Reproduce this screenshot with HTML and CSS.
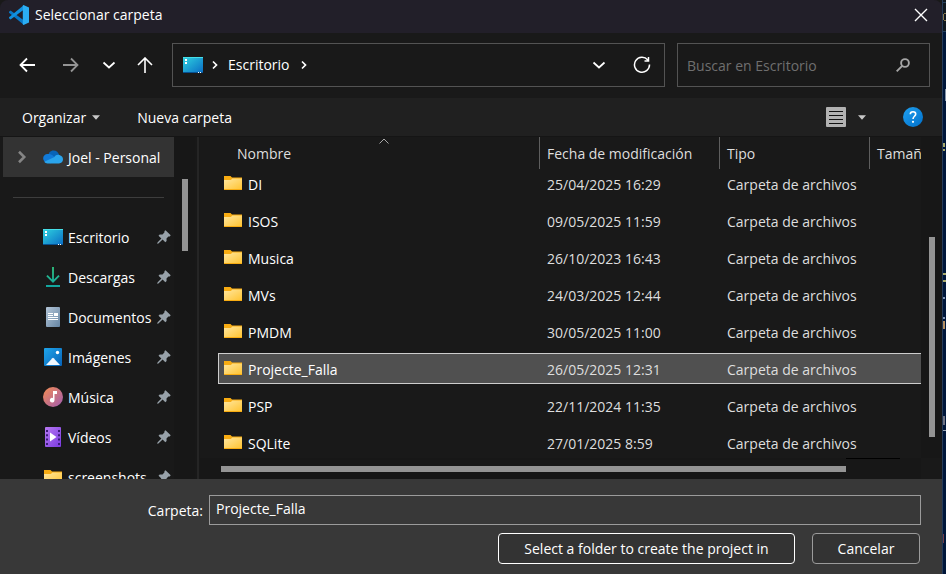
FILE: index.html
```
<!DOCTYPE html>
<html lang="es">
<head>
<meta charset="utf-8">
<title>Seleccionar carpeta</title>
<link rel="stylesheet" href="styles.css">
</head>
<body>
<svg class="defs" aria-hidden="true">
  <defs>
    <linearGradient id="g-folder" x1="0" y1="0" x2="1" y2="1"><stop offset="0" stop-color="#ffe7a0"/><stop offset="1" stop-color="#ffc433"/></linearGradient>
    <linearGradient id="g-desk" x1="0" y1="0" x2="1" y2="1"><stop offset="0" stop-color="#2fd3e0"/><stop offset="1" stop-color="#0a6cc4"/></linearGradient>
    <linearGradient id="g-down" x1="0" y1="0" x2="0" y2="1"><stop offset="0" stop-color="#2fc481"/><stop offset="1" stop-color="#12a5a0"/></linearGradient>
    <linearGradient id="g-doc" x1="0" y1="0" x2="1" y2="1"><stop offset="0" stop-color="#b4c6d8"/><stop offset="1" stop-color="#6585a3"/></linearGradient>
    <linearGradient id="g-img" x1="0" y1="0" x2="1" y2="1"><stop offset="0" stop-color="#1fa5ea"/><stop offset="1" stop-color="#0662b8"/></linearGradient>
    <linearGradient id="g-music" x1="0" y1="0" x2="1" y2="1"><stop offset="0" stop-color="#f58d52"/><stop offset="1" stop-color="#a05bb0"/></linearGradient>
    <linearGradient id="g-video" x1="0" y1="0" x2="1" y2="1"><stop offset="0" stop-color="#b778f2"/><stop offset="1" stop-color="#7a3ae0"/></linearGradient>
    <linearGradient id="g-help" x1="0" y1="0" x2="1" y2="1"><stop offset="0" stop-color="#20a0ee"/><stop offset="1" stop-color="#0070cc"/></linearGradient>
    <symbol id="i-folder" viewBox="0 0 18 14"><path d="M0 0h6.500L8 1.500H18V14H0z" fill="#f8ac12"/><path d="M0 4h7l1.200-1.500H18V13H0z" fill="url(#g-folder)"/></symbol>
    <symbol id="i-desk" viewBox="0 0 20 16"><rect width="20" height="16" rx="1" fill="url(#g-desk)"/><path d="M0 .5h20" stroke="#46dfe8"/><path d="M0 15.500h20" stroke="#075091"/><path d="M2 2h2v2H2zM2 5h2v2H2zM15 15h1v1h-1zM17 15h1v1h-1z" fill="#fff"/></symbol>
    <symbol id="i-pin" viewBox="0 0 14 14"><path d="M8.500.2 13.700 5.200 12.700 6.400l-1.300.1-1.900 1.900.1 2.700-1.300 1.200-2.700-2.700L1.400 13.500.2 13.800l.3-1.200L4.400 8.400 1.500 5.700l1.200-1.200 2.800-.1 1.900-1.900.1-1.400z" fill="#98a2aa"/></symbol>
    <symbol id="i-chev" viewBox="0 0 12 12"><path d="m4 2.500 3.500 3.500L4 9.500" fill="none" stroke="currentColor" stroke-width="1.700"/></symbol>
    <symbol id="i-chevdown" viewBox="0 0 14 14"><path d="m1.500 4.500 5.500 5 5.500-5" fill="none" stroke="currentColor" stroke-width="1.700"/></symbol>
    <symbol id="i-caret" viewBox="0 0 8 5"><path d="M0 .3h8L4 4.700z" fill="currentColor"/></symbol>
  </defs>
</svg>
<div class="desktop">
  <main class="dialog">
    <header class="titlebar">
      <svg class="app-icon" viewBox="0 0 20 20" aria-hidden="true"><path d="M0 6.800 1.600 5.400 15 15.500V20L0 7.800z" fill="#0878c8"/><path d="M0 13.200 1.600 14.600 15 4.500V0L0 12.200z" fill="#1090df"/><path d="M14.500 0 20 2.500v15L14.500 20l-.7-.7V.7z" fill="#2badf2"/></svg>
      <h1>Seleccionar carpeta</h1>
      <button class="close" aria-label="Cerrar"><svg viewBox="0 0 14 14"><path d="m1 1 12 12M13 1 1 13" fill="none" stroke="currentColor" stroke-width="1.400"/></svg></button>
    </header>
    <nav class="navbar" aria-label="Navegación">
      <div class="history">
        <button aria-label="Atrás"><svg viewBox="0 0 16 16"><path d="M16 8H1.500M8 1.500 1.500 8 8 14.500" fill="none" stroke="currentColor" stroke-width="1.800"/></svg></button>
        <button class="off" aria-label="Adelante"><svg viewBox="0 0 16 16"><path d="M0 8h14.500M8 1.500 14.500 8 8 14.500" fill="none" stroke="currentColor" stroke-width="1.800"/></svg></button>
        <button class="recent" aria-label="Ubicaciones recientes"><svg viewBox="0 0 14 14"><use href="#i-chevdown"/></svg></button>
        <button aria-label="Subir"><svg viewBox="0 0 16 16"><path d="M8 16V1M1 8l7-7 7 7" fill="none" stroke="currentColor" stroke-width="1.600"/></svg></button>
      </div>
      <div class="address">
        <svg class="desk" aria-hidden="true"><use href="#i-desk"/></svg>
        <svg class="chev" aria-hidden="true"><use href="#i-chev"/></svg>
        <a href="#">Escritorio</a>
        <svg class="chev" aria-hidden="true"><use href="#i-chev"/></svg>
        <button class="drop" aria-label="Ubicaciones anteriores"><svg viewBox="0 0 14 14"><use href="#i-chevdown"/></svg></button>
        <button class="reload" aria-label="Actualizar"><svg viewBox="0 0 18 18"><path d="M14.800 4A7.500 7.500 0 1 0 16.500 8.500M15.500 1v4h-4" fill="none" stroke="currentColor" stroke-width="1.500"/></svg></button>
      </div>
      <label class="search">
        <input type="search" placeholder="Buscar en Escritorio" aria-label="Buscar en Escritorio">
        <svg viewBox="0 0 14 14" aria-hidden="true"><circle cx="9" cy="5" r="3.900" fill="none" stroke="#a5a5a5" stroke-width="1.900"/><path d="M6.200 7.800.7 13.300" stroke="#a5a5a5" stroke-width="1.900"/></svg>
      </label>
    </nav>
    <div class="toolbar">
      <button>Organizar <svg class="caret" aria-hidden="true"><use href="#i-caret"/></svg></button>
      <button class="new">Nueva carpeta</button>
      <button class="view" aria-label="Cambiar la vista"><svg viewBox="0 0 20 20"><rect width="20" height="20" rx="1" fill="#b2b2b2"/><path d="M3 4.500h14M3 8.500h14M3 12.500h14M3 16.500h14" stroke="#111"/></svg></button>
      <button class="more" aria-label="Más opciones"><svg class="caret"><use href="#i-caret"/></svg></button>
      <button class="help" aria-label="Ayuda"><svg viewBox="0 0 20 20"><circle cx="10" cy="10" r="10" fill="url(#g-help)"/><path d="M7.300 7.200C7.300 5.500 8.400 4.700 10 4.700s2.700.9 2.700 2.300c0 2.200-2.700 2.300-2.700 5" fill="none" stroke="#fff" stroke-width="1.600"/><circle cx="10" cy="14.800" r="1.100" fill="#fff"/></svg></button>
    </div>
    <div class="content">
      <aside class="tree">
        <a class="account" href="#"><svg class="expand" aria-hidden="true"><use href="#i-chev"/></svg><svg class="ico" viewBox="0 0 20 20" aria-hidden="true"><path d="M5.500 9.500C5 5.500 7.500 3.400 10.500 3.400c3 0 5 2 5.500 4.600L10 12z" fill="#0864b8"/><path d="M4.200 15.500A4.200 4.200 0 0 1 4.500 7.100c2.200-.5 3.600.3 5 1.200l4 4-6 4z" fill="#117ad8"/><path d="M11 10.300c1.500-2.300 3.500-2.900 5.500-2.300 2 .6 3.500 2.300 3.500 4.200 0 2.300-1.700 4.200-4 4.200H4.500c-1.300 0-2.500-.6-3.200-1.600z" fill="#2aa4ec"/></svg><span>Joel - Personal</span></a>
        <hr>
        <a href="#"><svg class="ico" viewBox="0 0 20 20" aria-hidden="true"><use href="#i-desk" y="2" width="20" height="16"/></svg><span>Escritorio</span><svg class="pin"><use href="#i-pin"/></svg></a>
        <a href="#"><svg class="ico" viewBox="0 0 20 20" aria-hidden="true"><path d="M9.100 0h1.800v12.500l4.500-4.500 1.300 1.300L10 16 3.300 9.300 4.600 8l4.500 4.500zM3 18h14v2H3z" fill="url(#g-down)"/></svg><span>Descargas</span><svg class="pin"><use href="#i-pin"/></svg></a>
        <a href="#"><svg class="ico" viewBox="0 0 20 20" aria-hidden="true"><rect x="3" width="14" height="20" rx="1" fill="url(#g-doc)"/><path d="M5 6.500h5M5 8.500h5M5 10.500h10M5 12.500h10" stroke="#fff"/><path d="M11 6h4v3h-4z" fill="#fff"/></svg><span>Documentos</span><svg class="pin"><use href="#i-pin"/></svg></a>
        <a href="#"><svg class="ico" viewBox="0 0 20 20" aria-hidden="true"><rect x="1" y="1" width="18" height="18" rx="1" fill="url(#g-img)"/><path d="M3 18l6.300-6.800q.7-.7 1.400 0L17 18z" fill="#f2f8ff"/><circle cx="14.500" cy="5.500" r="1.700" fill="#fff"/></svg><span>Imágenes</span><svg class="pin"><use href="#i-pin"/></svg></a>
        <a href="#"><svg class="ico" viewBox="0 0 20 20" aria-hidden="true"><circle cx="10" cy="10" r="10" fill="url(#g-music)"/><path d="M10 4h4v3h-2.500v6.200A2.300 2.300 0 1 1 10 11z" fill="#fff"/></svg><span>Música</span><svg class="pin"><use href="#i-pin"/></svg></a>
        <a href="#"><svg class="ico" viewBox="0 0 20 20" aria-hidden="true"><rect x="2" width="16" height="20" rx="1" fill="url(#g-video)"/><path d="M4 3v15M16 3v15" stroke="#3b1a78" stroke-width="2" stroke-dasharray="2 2.300"/><path d="M7 5.500v9l6.500-4.500z" fill="#fff"/></svg><span>Vídeos</span><svg class="pin"><use href="#i-pin"/></svg></a>
        <a href="#"><svg class="ico" viewBox="0 0 20 20" aria-hidden="true"><use href="#i-folder" x="1" y="3" width="18" height="14"/></svg><span>screenshots</span><svg class="pin"><use href="#i-pin"/></svg></a>
      </aside>
      <div class="tree-scroll"><div class="thumb"></div></div>
      <div class="splitter"></div>
      <section class="files">
        <div class="list">
          <svg class="sort" viewBox="0 0 10 6" aria-hidden="true"><path d="m.5 5.500 4.500-4.500 4.500 4.500" fill="none" stroke="#a8a8a8"/></svg>
          <table>
            <colgroup><col class="c-name"><col class="c-date"><col class="c-type"><col class="c-size"></colgroup>
            <thead><tr><th>Nombre</th><th>Fecha de modificación</th><th>Tipo</th><th>Tamaño</th></tr></thead>
            <tbody>
              <tr><td><svg class="folder"><use href="#i-folder"/></svg>DI</td><td>25/04/2025 16:29</td><td>Carpeta de archivos</td><td></td></tr>
              <tr><td><svg class="folder"><use href="#i-folder"/></svg>ISOS</td><td>09/05/2025 11:59</td><td>Carpeta de archivos</td><td></td></tr>
              <tr><td><svg class="folder"><use href="#i-folder"/></svg>Musica</td><td>26/10/2023 16:43</td><td>Carpeta de archivos</td><td></td></tr>
              <tr><td><svg class="folder"><use href="#i-folder"/></svg>MVs</td><td>24/03/2025 12:44</td><td>Carpeta de archivos</td><td></td></tr>
              <tr><td><svg class="folder"><use href="#i-folder"/></svg>PMDM</td><td>30/05/2025 11:00</td><td>Carpeta de archivos</td><td></td></tr>
              <tr class="selected"><td><svg class="folder"><use href="#i-folder"/></svg>Projecte_Falla</td><td>26/05/2025 12:31</td><td>Carpeta de archivos</td><td></td></tr>
              <tr><td><svg class="folder"><use href="#i-folder"/></svg>PSP</td><td>22/11/2024 11:35</td><td>Carpeta de archivos</td><td></td></tr>
              <tr><td><svg class="folder"><use href="#i-folder"/></svg>SQLite</td><td>27/01/2025 8:59</td><td>Carpeta de archivos</td><td></td></tr>
            </tbody>
          </table>
        </div>
        <div class="v-scroll"><div class="thumb"></div></div>
        <div class="h-scroll"><div class="thumb"></div><div class="edge"></div></div>
      </section>
    </div>
    <footer>
      <div class="field"><label for="folder">Carpeta:</label><input id="folder" type="text" value="Projecte_Falla"></div>
      <div class="actions"><button class="primary">Select a folder to create the project in</button><button class="cancel">Cancelar</button></div>
    </footer>
  </main>
  <div class="behind">
    <svg viewBox="0 0 4 574" preserveAspectRatio="xMinYMin slice" aria-hidden="true"><path d="M0 0h4v32H0z" fill="#101820"/><path d="M0 2.500h4M0 31.500h4" stroke="#24405c"/><path d="M0 14h1v6H0zM1 13h2v1H1zM1 20h2v1H1z" fill="#8b7a50"/><path d="M2 89h2v12H2z" fill="#8494a8"/><path d="M0 143h2v4H0zM0 149h2v2H0zM0 273h3v2H0zM0 280h3v2H0z" fill="#a9aa6b"/><path d="M0 297h2v2H0zM0 317h2v2H0z" fill="#8296b8"/><path d="M0 321h2v8H0z" fill="#b58f62"/><path d="M0 416h2v9H0z" fill="#6d7284"/><path d="M0 430.500h4" stroke="#9aa5b5"/><path d="M0 534h1v9H0z" fill="#743e48"/></svg>
  </div>
</div>
</body>
</html>
```

FILE: styles.css
```
* { box-sizing: border-box; }
body {
  margin: 0;
  background: #00173b;
  color: #fff;
  font: 14px/20px "Open Sans", "Noto Sans", sans-serif;
}
button, input { font: inherit; color: inherit; }
button { padding: 0; border: 0; background: none; }
a { color: inherit; text-decoration: none; }
svg { display: block; flex: none; }
.defs { position: absolute; width: 0; height: 0; }

.desktop { display: flex; height: 100vh; }
.dialog {
  flex: 1;
  min-width: 0;
  display: flex;
  flex-direction: column;
  background: #191919;
}
.behind { width: 4px; overflow: hidden; border-left: 1px solid #263b58; }
.behind svg { width: 4px; height: 574px; }

.titlebar {
  display: flex;
  align-items: center;
  height: 33px;
  padding: 0 14px 4px 9px;
  background: #221f29;
  border-top-left-radius: 8px;
  border-top-right-radius: 8px;
}
.app-icon { width: 20px; height: 20px; }
h1 { flex: 1; margin: 0 0 0 6px; font-size: 14px; font-weight: 400; }
.close svg { width: 14px; height: 14px; }

.navbar {
  display: flex;
  gap: 12px;
  height: 65px;
  padding: 10px 12px 11px 19px;
}
.history { display: flex; align-items: center; width: 141px; gap: 28px; }
.history svg { width: 16px; height: 16px; }
.history .off { color: #949494; }
.history .recent svg, .drop svg { width: 14px; height: 14px; }
.history .recent { margin: 0 -7px 0 -5px; }
.address, .search {
  display: flex;
  align-items: center;
  border: 1px solid #535353;
}
.address { flex: 1; padding: 0 13px 0 10px; }
.desk { width: 20px; height: 16px; }
.chev { width: 12px; height: 12px; margin: 0 7px 0 6px; }
.address a + .chev { margin-left: 8px; }
.drop { margin-left: auto; }
.reload { margin-left: 27px; }
.reload svg { width: 18px; height: 18px; }
.search { width: 253px; padding: 0 19px 0 9px; }
.search input {
  flex: 1;
  min-width: 0;
  padding: 2px 0 0;
  border: 0;
  outline: 0;
  background: none;
}
.search input::placeholder { color: #6f6f6f; opacity: 1; }
.search svg { width: 14px; height: 14px; }

.toolbar {
  display: flex;
  align-items: center;
  height: 39px;
  padding: 0 19px 0 22px;
  background: #202020;
  border-bottom: 1px solid #151515;
}
.toolbar button { display: flex; align-items: center; gap: 6px; padding-top: 1px; }
.caret { width: 8px; height: 5px; color: #c8c8c8; }
.toolbar .new { margin-left: 37px; }
.toolbar .view { margin-left: auto; }
.toolbar .view, .toolbar .help { padding-top: 0; }
.view svg, .help svg { width: 20px; height: 20px; }
.more { margin: 0 37px 0 12px; }

.content { flex: 1; min-height: 0; display: flex; }
.tree { width: 174px; padding-left: 3px; overflow: hidden; }
.tree a {
  display: flex;
  align-items: center;
  height: 40px;
  padding: 0 3px 0 40px;
}
.tree .account { padding-left: 13px; background: #333; }
.expand { width: 12px; height: 12px; margin-right: 15px; color: #858585; transform: scale(1.5); }
.ico { width: 20px; height: 20px; margin-right: 5px; }
.tree span { padding-top: 2px; white-space: nowrap; }
.pin { width: 14px; height: 14px; margin-left: auto; }
hr { margin: 20px 10px 19px; border: 0; border-top: 1px solid #3d3d3d; }
.thumb { background: #949494; }
.tree-scroll { width: 21px; padding: 42px 7px 0 8px; background: #171717; }
.tree-scroll .thumb { height: 72px; }
.splitter { width: 5px; border: solid #181818; border-width: 0 1px 0 2px; background: #252525; }

.files {
  flex: 1;
  min-width: 0;
  display: grid;
  grid-template: minmax(0, 1fr) 21px / minmax(0, 1fr) 21px;
}
.list { position: relative; overflow: hidden; padding-left: 18px; }
.sort { position: absolute; top: 1px; left: 179px; width: 10px; height: 6px; }
table { width: 801px; table-layout: fixed; border-collapse: separate; border-spacing: 0; }
.c-name { width: 321px; }
.c-date { width: 180px; }
.c-type { width: 150px; }
.c-size { width: 150px; }
th, td { height: 37px; padding: 2px 8px 0; text-align: left; font-weight: 400; white-space: nowrap; color: #dedede; }
th { position: relative; height: 28px; padding-top: 6px; }
th:first-child { padding-left: 19px; }
th + th::before {
  content: "";
  position: absolute;
  top: 0;
  left: 0;
  height: 32px;
  border-left: 1px solid #5e5e5e;
}
td { border: solid transparent; border-width: 3px 0; background-clip: padding-box; }
td:first-child { padding-left: 6px; color: #fff; }
.folder { display: inline-block; width: 18px; height: 14px; margin-right: 6px; vertical-align: 0; }
.selected td { background-color: #505050; box-shadow: inset 0 1px #cecece, inset 0 -1px #cecece; }
.selected td:first-child { box-shadow: inset 0 1px #cecece, inset 0 -1px #cecece, inset 1px 0 #cecece; }
.v-scroll { padding: 100px 7px 0 8px; background: #171717; }
.v-scroll .thumb { height: 200px; }
.h-scroll { display: flex; align-items: center; padding-left: 21px; background: #171717; }
.h-scroll .thumb { width: 625px; height: 6px; }
.h-scroll .edge { align-self: flex-start; width: 54px; border-top: 1px solid #000; }

footer { height: 95px; padding: 16px 21px 0 0; background: #383838; }
.field { display: flex; align-items: center; gap: 6px; height: 30px; }
.field label { width: 203px; padding-top: 1px; text-align: right; }
.field input {
  flex: 1;
  min-width: 0;
  height: 30px;
  padding: 0 6px 3px;
  border: 1px solid #9b9b9b;
  background: #383838;
  outline: 0;
}
.actions { display: flex; justify-content: flex-end; gap: 17px; padding: 8px 1px 0 0; }
.actions button {
  height: 31px;
  padding: 0 22px;
  border: 1px solid #9b9b9b;
  border-radius: 4px;
  background: #333;
}
.actions .primary { width: 297px; border-color: #fff; }
.actions .cancel { width: 108px; }
```
